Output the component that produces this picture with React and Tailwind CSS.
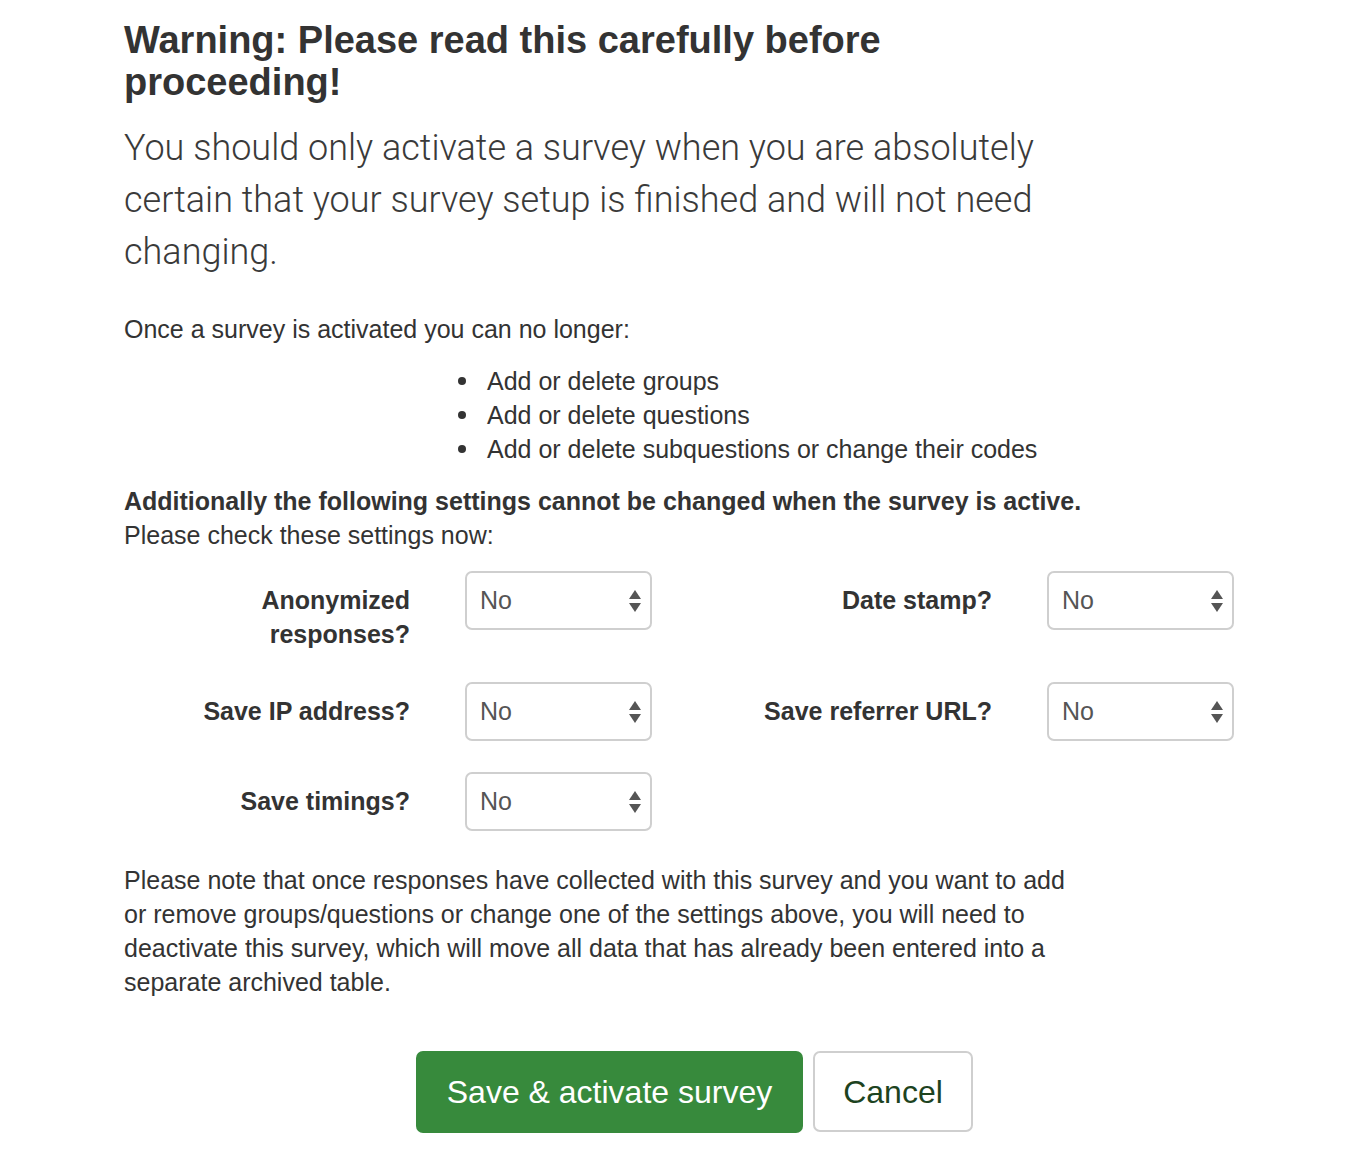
import React from 'react';

const font = { fontFamily: '"Liberation Sans", Arial, sans-serif' };

function SelectBox() {
  return (
    <div className="relative w-[187px] h-[59px] rounded-[7px] border-2 border-[#cfcfcf] bg-white flex items-center pl-[13px] text-[25px] text-[#555]">
      <span>No</span>
      <svg className="absolute right-[8px] top-1/2 -translate-y-1/2" width="14" height="26" viewBox="0 0 14 26">
        <path d="M7 2 L13 11 L1 11 Z" fill="#555" />
        <path d="M1 15 L13 15 L7 24 Z" fill="#555" />
      </svg>
    </div>
  );
}

function Field({ label, lines }) {
  return (
    <div className="flex gap-[55px]">
      <label className="w-[286px] text-right font-bold pt-[12px] leading-[34px]">
        {lines ? lines.map((l, i) => <div key={i}>{l}</div>) : label}
      </label>
      <SelectBox />
    </div>
  );
}

const items = [
  'Add or delete groups',
  'Add or delete questions',
  'Add or delete subquestions or change their codes',
];

export default function App() {
  return (
    <div className="bg-white min-h-[1166px] text-[#333] pl-[124px] pt-[19px]" style={font}>
      <div className="w-[962px]">
        <h1 className="text-[38px] font-bold leading-[42px]">
          Warning: Please read this carefully before proceeding!
        </h1>
        <p
          className="mt-[19px] text-[36px] leading-[52px] text-[#3a3a3a]"
          style={{ fontFamily: 'Roboto, "Liberation Sans", sans-serif', fontWeight: 300 }}
        >
          You should only activate a survey when you are absolutely certain that your survey setup is finished and will not need changing.
        </p>
        <p className="mt-[34px] text-[25px] leading-[34px]">Once a survey is activated you can no longer:</p>
        <ul className="mt-[18px] pl-[332px] text-[25px] leading-[34px]">
          {items.map((t) => (
            <li key={t} className="flex items-center">
              <span className="w-[8px] h-[8px] rounded-full bg-[#333] ml-[2px] mr-[21px]" />
              <span>{t}</span>
            </li>
          ))}
        </ul>
        <p className="mt-[18px] text-[25px] leading-[34px]">
          <span className="font-bold">Additionally the following settings cannot be changed when the survey is active.</span>
          <br />
          Please check these settings now:
        </p>
      </div>

      <div className="mt-[19px] grid grid-cols-[582px_582px] gap-y-[31px] text-[25px]">
        <Field lines={['Anonymized', 'responses?']} />
        <Field label="Date stamp?" />
        <Field label="Save IP address?" />
        <Field label="Save referrer URL?" />
        <Field label="Save timings?" />
      </div>

      <p className="mt-[32px] w-[962px] text-[25px] leading-[34px]">
        Please note that once responses have collected with this survey and you want to add or remove groups/questions or change one of the settings above, you will need to deactivate this survey, which will move all data that has already been entered into a separate archived table.
      </p>

      <div className="mt-[52px] pl-[292px] flex gap-[10px]">
        <button className="w-[387px] h-[82px] rounded-[7px] bg-[#378a3c] text-white text-[32px]">
          Save &amp; activate survey
        </button>
        <button className="w-[160px] h-[81px] rounded-[7px] border-2 border-[#cfcfcf] bg-white text-[#1d431f] text-[32px]">
          Cancel
        </button>
      </div>
    </div>
  );
}
